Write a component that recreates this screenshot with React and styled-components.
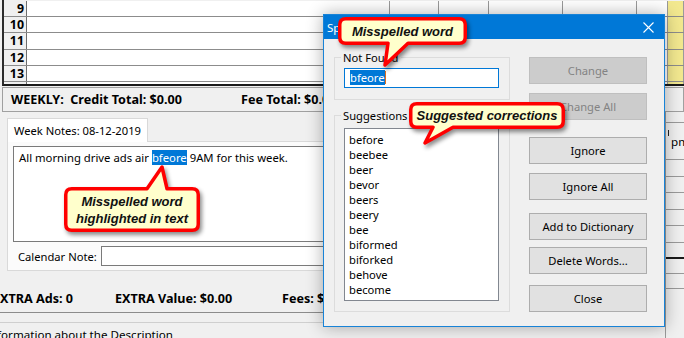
import React from 'react';
import styled, { createGlobalStyle } from 'styled-components';

const ui = `"Noto Sans", "Open Sans", sans-serif`;

const GlobalStyle = createGlobalStyle`
  html, body {
    margin: 0;
    padding: 0;
  }
  body {
    background: #f0f0f0;
    font-family: ${ui};
    font-size: 11.2px;
    color: #000;
  }
  * {
    box-sizing: border-box;
  }
`;

const Page = styled.div`
  position: relative;
  width: 684px;
  height: 338px;
  overflow: hidden;
  background: #f0f0f0;
`;

/* ---------- schedule grid ---------- */

const Grid = styled.div`
  height: 86px;
  padding-top: 1px;
  margin-left: 2px;
  overflow: hidden;
  border-left: 2px solid #2b2b2b;
  border-bottom: 2px solid #1a1a1a;
`;

const GridRow = styled.div`
  display: flex;
  height: 16.2px;
  border-bottom: 1px solid #8c8c8c;
`;

const NumCell = styled.div`
  width: 23px;
  flex: none;
  background: #f0f0f0;
  border-right: 1px solid #6e6e6e;
  text-align: right;
  padding-right: 2px;
  font-weight: 700;
  font-size: 12.4px;
  line-height: 15px;
`;

const Cell = styled.div`
  width: ${p => p.$w}px;
  flex: ${p => (p.$w ? 'none' : '1')};
  background: ${p => (p.$yellow ? '#f2e88f' : '#fff')};
  border-right: 1px solid #9a9a9a;
`;

/* ---------- totals ---------- */

const WeeklyBar = styled.div`
  display: flex;
  align-items: center;
  height: 25px;
  margin: 1px 0 0 2px;
  padding-left: 8px;
  border: 1px solid #a0a0a0;
  font-weight: 700;
  font-size: 12.6px;
  white-space: pre;
`;

const BarItem = styled.span`
  width: ${p => p.$w}px;
  flex: none;
`;

const Lower = styled.div`
  display: flex;
`;

const LeftPane = styled.div`
  width: 665px;
  flex: none;
`;

const TabStrip = styled.div`
  display: flex;
  margin: 6px 0 0 7px;
`;

const Tab = styled.div`
  position: relative;
  z-index: 1;
  height: 24px;
  width: 141px;
  margin-bottom: -1px;
  padding-left: 6px;
  border: 1px solid #d9d9d9;
  border-bottom: none;
  background: #fff;
  line-height: 23px;
  white-space: nowrap;
`;

const TabPanel = styled.div`
  margin-left: 7px;
  padding: 4px 0 4px 5px;
  border: 1px solid #d9d9d9;
  background: #fbfbfb;
`;

const NotesBox = styled.div`
  height: 96px;
  padding: 3px 5px;
  border: 1px solid #7a7a7a;
  background: #fff;
  line-height: 15px;
  font-size: 11.3px;
`;

const Selected = styled.span`
  background: #0078d7;
  color: #fff;
`;

const CalendarRow = styled.div`
  display: flex;
  align-items: center;
  margin-top: 4px;
`;

const FieldLabel = styled.label`
  width: 88px;
  flex: none;
  padding-left: 5px;
  white-space: nowrap;
`;

const TextInput = styled.div`
  flex: 1;
  height: 20px;
  border: 1px solid #7a7a7a;
  background: #fff;
`;

const ExtraBar = styled.div`
  display: grid;
  grid-template-columns: 122px 167px auto;
  margin-left: -7px;
  padding: 20px 0 5px;
  border-bottom: 1px solid #8c8c8c;
  font-weight: 700;
  font-size: 12.6px;
  line-height: 16px;
  white-space: nowrap;
`;

const StatusLine = styled.div`
  margin: 9px 0 0 -14px;
  padding-top: 4px;
  border-top: 1px solid #cfcfcf;
  line-height: 15px;
  font-size: 11.6px;
  white-space: nowrap;
`;

const RightPane = styled.div`
  flex: 1;
  border-left: 1px solid #9a9a9a;
`;

const SideRow = styled.div`
  position: relative;
  height: ${p => p.$h}px;
  border-bottom: ${p => (p.$thick ? '2px solid #1a1a1a' : '1px solid #9a9a9a')};
  padding: ${p => (p.$pad ? '11px 0 0 5px' : '0')};
  font-size: 11.6px;
`;

const PmMark = styled.span`
  position: absolute;
  left: 2px;
  top: 7px;
  width: 1px;
  height: 6px;
  background: #222;
`;

/* ---------- spelling dialog ---------- */

const Dialog = styled.div`
  position: absolute;
  left: 323px;
  top: 14px;
  width: 342px;
  height: 313px;
  border: 1px solid #1883d7;
  background: #f0f0f0;
  box-shadow: 0 0 16px rgba(0, 0, 0, 0.32);
  z-index: 2;
`;

const TitleBar = styled.div`
  display: flex;
  align-items: center;
  height: 24px;
  padding-left: 3px;
  background: #0078d7;
  color: #fff;
  font-size: 11.6px;
`;

const CloseBox = styled.div`
  display: flex;
  align-items: center;
  justify-content: center;
  width: 32px;
  height: 24px;
  margin-left: auto;
`;

const Client = styled.div`
  display: flex;
  gap: 19px;
  padding: 11px 17px 0 10px;
`;

const LeftCol = styled.div`
  width: 176px;
  flex: none;
`;

const RightCol = styled.div`
  display: flex;
  flex-direction: column;
  width: 118px;
  flex: none;
  padding-top: 7px;
`;

const Group = styled.fieldset`
  margin: ${p => p.$mt || 0}px 0 0;
  min-width: 0;
  padding: ${p => p.$pt}px 9px ${p => p.$pb}px 9px;
  border: 1px solid #dcdcdc;
`;

const Legend = styled.legend`
  margin-left: -3px;
  padding: 0 2px;
  line-height: 15px;
`;

const WordInput = styled.div`
  width: 155px;
  height: 20px;
  padding: 2px 0 0 5px;
  border: 1px solid #0078d7;
  background: #fff;
  line-height: 14px;
`;

const Caret = styled.span`
  display: inline-block;
  width: 1px;
  height: 13px;
  vertical-align: -2px;
  background: #e07020;
`;

const ListBox = styled.div`
  width: 155px;
  height: 173px;
  padding: 3px 0 0 4px;
  border: 1px solid #828790;
  background: #fff;
`;

const ListItem = styled.div`
  line-height: 15px;
`;

const Button = styled.div`
  height: 27px;
  margin-top: ${p => p.$mt}px;
  display: flex;
  align-items: center;
  justify-content: center;
  border: 1px solid ${p => (p.$disabled ? '#bfbfbf' : '#adadad')};
  background: ${p => (p.$disabled ? '#cccccc' : '#e1e1e1')};
  color: ${p => (p.$disabled ? '#838383' : '#000')};
`;

/* ---------- callouts ---------- */

const CalloutWrap = styled.div`
  position: absolute;
  left: ${p => p.$x}px;
  top: ${p => p.$y}px;
  width: ${p => p.$w}px;
  height: ${p => p.$h}px;
  display: flex;
  flex-direction: column;
  align-items: center;
  justify-content: center;
  z-index: 5;
  font: italic 700 13px/17px "Liberation Sans", Arial, sans-serif;
  color: #111;
`;

const CalloutSvg = styled.svg`
  position: absolute;
  left: 0;
  top: 0;
  overflow: visible;
  filter: drop-shadow(2px 3px 2px rgba(0, 0, 0, 0.45));
`;

const CalloutText = styled.span`
  position: relative;
  text-align: center;
`;

function calloutPath(w, h, t) {
  const i = 1.75;
  const r = 6;
  const x0 = i, y0 = i, x1 = w - i, y1 = h - i;
  if (t.side === 'top') {
    return `M${x0 + r},${y0} H${t.b1} L${t.tx},${t.ty} L${t.b2},${y0} H${x1 - r} Q${x1},${y0} ${x1},${y0 + r} V${y1 - r} Q${x1},${y1} ${x1 - r},${y1} H${x0 + r} Q${x0},${y1} ${x0},${y1 - r} V${y0 + r} Q${x0},${y0} ${x0 + r},${y0} Z`;
  }
  return `M${x0 + r},${y0} H${x1 - r} Q${x1},${y0} ${x1},${y0 + r} V${y1 - r} Q${x1},${y1} ${x1 - r},${y1} H${t.b2} L${t.tx},${t.ty} L${t.b1},${y1} H${x0 + r} Q${x0},${y1} ${x0},${y1 - r} V${y0 + r} Q${x0},${y0} ${x0 + r},${y0} Z`;
}

const Callout = ({ x, y, w, h, tail, children }) => (
  <CalloutWrap $x={x} $y={y} $w={w} $h={h}>
    <CalloutSvg width={w} height={h}>
      <path
        d={calloutPath(w, h, tail)}
        fill="#ffffcc"
        stroke="#ff0000"
        strokeWidth="3.5"
        strokeLinejoin="round"
      />
    </CalloutSvg>
    <CalloutText>{children}</CalloutText>
  </CalloutWrap>
);

const columns = [363, 49, 50, 74, 74, 31];
const rows = [9, 10, 11, 12, 13, 14];
const suggestions = [
  'before', 'beebee', 'beer', 'bevor', 'beers', 'beery',
  'bee', 'biformed', 'biforked', 'behove', 'become',
];

const App = () => (
  <Page>
    <GlobalStyle />

    <Grid>
      {rows.map(n => (
        <GridRow key={n}>
          <NumCell>{n}</NumCell>
          {columns.map((w, i) => (
            <Cell key={i} $w={w} />
          ))}
          <Cell $yellow />
        </GridRow>
      ))}
    </Grid>

    <WeeklyBar>
      <BarItem $w={230}>WEEKLY:  Credit Total: $0.00</BarItem>
      <BarItem $w={130}>Fee Total: $0.00</BarItem>
    </WeeklyBar>

    <Lower>
      <LeftPane>
        <TabStrip>
          <Tab>Week Notes: 08-12-2019</Tab>
        </TabStrip>
        <TabPanel>
          <NotesBox>
            All morning drive ads air <Selected>bfeore</Selected> 9AM for this week.
          </NotesBox>
          <CalendarRow>
            <FieldLabel>Calendar Note:</FieldLabel>
            <TextInput />
          </CalendarRow>
        </TabPanel>
        <ExtraBar>
          <span>EXTRA Ads: 0</span>
          <span>EXTRA Value: $0.00</span>
          <span>Fees: $0.00</span>
        </ExtraBar>
        <StatusLine>Information about the Description</StatusLine>
      </LeftPane>

      <RightPane>
        <SideRow $h={11} />
        <SideRow $h={37} $pad>
          <PmMark />
          pm
        </SideRow>
        <SideRow $h={16.5} />
        <SideRow $h={16.5} />
        <SideRow $h={16.5} />
        <SideRow $h={16.5} />
        <SideRow $h={16.5} />
        <SideRow $h={16.5} $thick />
        <SideRow $h={15} />
        <SideRow $h={15} />
      </RightPane>
    </Lower>

    <Dialog>
      <TitleBar>
        Spelling
        <CloseBox>
          <svg width="11" height="11" viewBox="0 0 11 11">
            <path d="M0.5 0.5 L10.5 10.5 M10.5 0.5 L0.5 10.5" stroke="#fff" strokeWidth="1.1" />
          </svg>
        </CloseBox>
      </TitleBar>
      <Client>
        <LeftCol>
          <Group $pt={3} $pb={11}>
            <Legend>Not Found</Legend>
            <WordInput>
              <Selected>bfeore</Selected>
              <Caret />
            </WordInput>
          </Group>
          <Group $mt={8} $pt={5} $pb={10}>
            <Legend>Suggestions</Legend>
            <ListBox>
              {suggestions.map(s => (
                <ListItem key={s}>{s}</ListItem>
              ))}
            </ListBox>
          </Group>
        </LeftCol>
        <RightCol>
          <Button $mt={0} $disabled>Change</Button>
          <Button $mt={9} $disabled>Change All</Button>
          <Button $mt={17}>Ignore</Button>
          <Button $mt={9}>Ignore All</Button>
          <Button $mt={13}>Add to Dictionary</Button>
          <Button $mt={7}>Delete Words...</Button>
          <Button $mt={11}>Close</Button>
        </RightCol>
      </Client>
    </Dialog>

    <Callout x={338} y={17} w={129} h={28} tail={{ side: 'bottom', b1: 50, b2: 70, tx: 47, ty: 48 }}>
      Misspelled word
    </Callout>
    <Callout x={409} y={102} w={156} h={27} tail={{ side: 'bottom', b1: 24, b2: 44, tx: 16, ty: 41 }}>
      Suggested corrections
    </Callout>
    <Callout x={64} y={187} w={136} h={45} tail={{ side: 'top', b1: 83, b2: 103, tx: 98, ty: -20 }}>
      Misspelled word
      <br />
      highlighted in text
    </Callout>
  </Page>
);

export default App;
